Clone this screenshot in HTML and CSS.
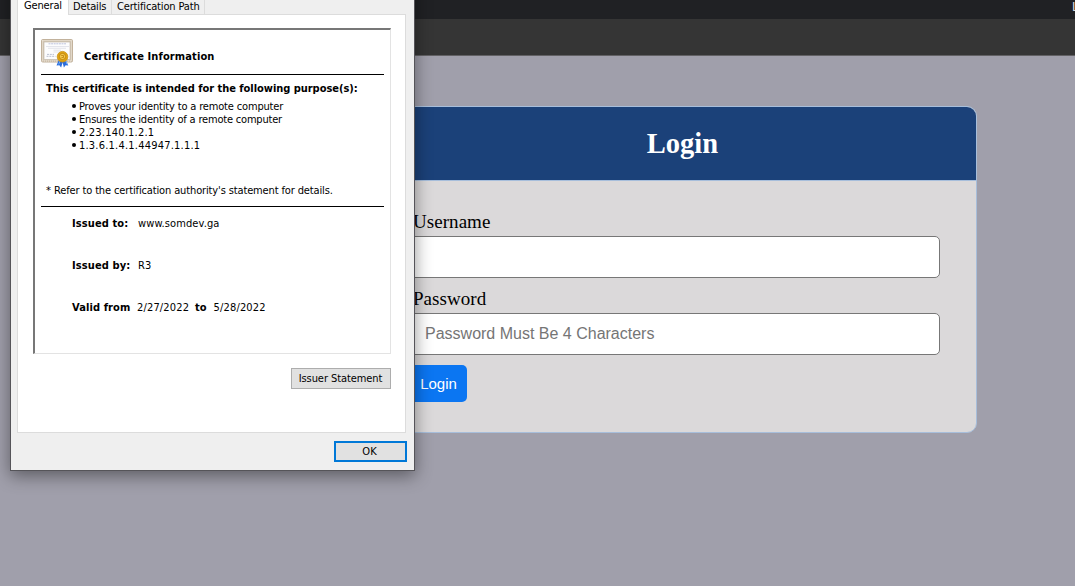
FILE: index.html
```html
<!DOCTYPE html>
<html lang="en">
<head>
<meta charset="utf-8">
<title>Login</title>
<link rel="stylesheet" href="styles.css">
</head>
<body>
<header class="tabstrip"><span>L</span></header>
<div class="toolbar"></div>
<main class="page">
  <section class="card">
    <h1 class="card-title">Login</h1>
    <form class="form">
      <label for="user">Username</label>
      <input id="user" type="text">
      <label for="pass">Password</label>
      <input id="pass" type="text" placeholder="Password Must Be 4 Characters">
      <button class="submit" type="button">Login</button>
    </form>
  </section>
</main>

<div class="dialog">
  <nav class="tabs">
    <span class="tab active">General</span>
    <span class="tab details">Details</span>
    <span class="tab path">Certification Path</span>
  </nav>
  <div class="panel">
    <div class="sheet">
      <div class="sheet-head">
        <svg class="cert" width="34" height="32" viewBox="0 0 34 32">
          <rect x=".5" y="1.5" width="31" height="22.5" rx="1.2" fill="#d5c9b7" stroke="#c2b29c"/>
          <rect x="1.5" y="2.5" width="29" height="20.5" fill="none" stroke="#eee6da" stroke-dasharray="1 1"/>
          <rect x="3" y="4" width="26" height="17.6" fill="#fcfcfd" stroke="#bbb0a0" stroke-width=".6"/>
          <path d="M7.5 5.800H25" stroke="#bcc2dc" stroke-width="1" stroke-dasharray="2 .6"/>
          <path d="M5 8.500H28M7 10.300H25M12.500 12.200H20M12.500 14H20" stroke="#d8dae3" stroke-width=".7"/>
          <path d="M6 16.400h7M5.500 18.300h9" stroke="#a9afc4" stroke-width=".8" stroke-dasharray="2 .8"/>
          <path d="M18 21.500 15.500 27.500l2.900-.3 1.700 2.300 2-6.500zM24.500 21.500l2.800 6-2.700-.3-1.700 2.300-1.700-6.500z" fill="#2a6ddd"/>
          <path d="m19 23-1.300 3.500M24.800 23l1.400 3.300" stroke="#7ab0f5"/>
          <circle cx="21.500" cy="18.700" r="5.300" fill="#dfa313" stroke="#c98f10" stroke-width=".8"/>
          <circle cx="21.500" cy="18.500" r="3.100" fill="#f5c94c" stroke="#b77d0a" stroke-width=".8"/>
          <path d="M20.200 17.500h2.300v2h-2" fill="none" stroke="#b77d0a" stroke-width=".8"/>
        </svg>
        <h2>Certificate Information</h2>
      </div>
      <div class="intent">
        <h3>This certificate is intended for the following purpose(s):</h3>
        <ul>
          <li><span class="identity">Proves your identity to a remote computer</span></li>
          <li><span class="ensures">Ensures the identity of a remote computer</span></li>
          <li><span class="oid">2.23.140.1.2.1</span></li>
          <li><span class="oid">1.3.6.1.4.1.44947.1.1.1</span></li>
        </ul>
        <p class="note"><span class="star">*</span><span class="refer">Refer to the certification authority's statement for details.</span></p>
      </div>
      <div class="facts">
        <p><b class="to">Issued to:</b><span class="site">www.somdev.ga</span></p>
        <p><b class="by">Issued by:</b><span>R3</span></p>
        <p><b class="from">Valid from</b><span class="date">2/27/2022</span><b class="until">to</b><span class="date">5/28/2022</span></p>
      </div>
    </div>
    <button class="issuer" type="button"><span>Issuer Statement</span></button>
  </div>
  <button class="ok" type="button">OK</button>
</div>
</body>
</html>
```
FILE: styles.css
```css
* { box-sizing: border-box; }
body { margin: 0; height: 586px; overflow: hidden; background: #a09fab; font-family: "Liberation Serif", serif; }
h1, h2, h3, p, ul { margin: 0; padding: 0; }

.tabstrip { height: 19px; background: #202124; color: #ddd; display: flex; justify-content: flex-end; overflow: hidden; font: 13px/14px "Liberation Sans", sans-serif; }
.tabstrip span { width: 3px; flex: none; }
.toolbar { height: 37px; background: #353535; border-bottom: 1px solid #626164; }

.page { padding: 50px 98px 0 388px; }
.card { height: 327px; border: 1px solid #a7bedb; border-radius: 10px; background: #dbd9da; overflow: hidden; }
.card-title { height: 74px; background: #1b4179; border-bottom: 1px solid #a7bedb; color: #fff; text-align: center; font-size: 28.500px; line-height: 73px; }
.form { padding: 30px 36px 0 19px; display: flex; flex-direction: column; align-items: flex-start; }
.form label { font-size: 19px; line-height: 22px; height: 25px; color: #000; margin-left: 5px; letter-spacing: .05px; }
.form input { width: 100%; height: 42px; border: 1px solid #777; border-radius: 5px; background: #fff; padding: 0 16px; margin: 0 0 10px; font: 16px "Liberation Sans", sans-serif; }
.form input::placeholder { color: #757575; opacity: 1; }
.submit { width: 59px; height: 37px; border: 0; border-radius: 5px; padding: 0 0 0 2px; background: #0b76f2; color: #fff; font: 15px "Liberation Sans", sans-serif; }

.dialog { position: absolute; left: 10px; top: -30px; width: 405px; height: 501px; padding: 24px 8px 0 6px; border: 1px solid #555459; background: #efefef; box-shadow: 0 5px 16px rgba(0,0,0,.42); color: #000; font: 11px/13px "DejaVu Sans Condensed", "DejaVu Sans", sans-serif; font-stretch: condensed; }
.tabs { display: flex; height: 19px; align-items: flex-end; }
.tab { height: 19px; padding: 5px 0 0 4px; border-right: 1px solid #dcdcdc; white-space: nowrap; letter-spacing: -.15px; }
.tab.active { height: 20px; width: 52px; padding: 4px 0 0 6px; background: #fff; border-left: 1px solid #dcdcdc; margin-bottom: -1px; position: relative; z-index: 1; }
.details { width: 43px; }
.path { width: 93px; padding-left: 5px; }
.panel { height: 419px; padding: 13px 14px 0 15px; border: 1px solid #dcdcdc; background: #fff; display: flex; flex-direction: column; align-items: flex-end; }
.sheet { width: 358px; height: 326px; padding: 8px 6px 0; border: 1px solid #e3e3e3; border-top: 2px solid #777; border-left: 2px solid #777; }
.sheet-head { height: 37px; display: flex; border-bottom: 1px solid #000; }
.sheet-head h2 { font-size: 11px; line-height: 13px; margin: 12px 0 0 9px; letter-spacing: .12px; }
.intent { height: 132px; padding: 7px 0 0 5px; border-bottom: 1px solid #000; white-space: nowrap; }
.intent h3 { font-size: 11px; line-height: 13px; margin-bottom: 5px; letter-spacing: -.035px; }
.intent ul { list-style: none; padding-left: 26px; }
.intent li { height: 13px; display: flex; align-items: center; }
.intent li::before { content: ""; width: 4px; height: 4px; border-radius: 50%; background: #000; margin: -1px 3px 0 0; }
.identity { letter-spacing: -.165px; }
.ensures { letter-spacing: -.19px; }
.oid { letter-spacing: .21px; }
.note { margin-top: 32px; display: flex; }
.star { width: 8px; }
.refer { letter-spacing: -.133px; }
.facts { padding: 10px 0 0 31px; display: grid; gap: 29px; white-space: nowrap; }
.facts p { display: flex; height: 13px; }
.site { letter-spacing: .1px; }
.to, .by { width: 66px; letter-spacing: .1px; }
.from { width: 65px; letter-spacing: .1px; }
.until { margin: 0 7px 0 6px; }
.date { width: 52px; letter-spacing: .16px; }
.issuer, .ok { font: inherit; color: #000; background: #e1e1e1; padding: 0; }
.issuer { width: 100px; height: 21px; margin-top: 14px; border: 1px solid #adadad; white-space: nowrap; letter-spacing: -.08px; padding-right: 1px; }
.ok { display: block; width: 73px; height: 21px; margin: 8px -1px 0 auto; border: 2px solid #0078d7; padding-right: 2px; }
```
